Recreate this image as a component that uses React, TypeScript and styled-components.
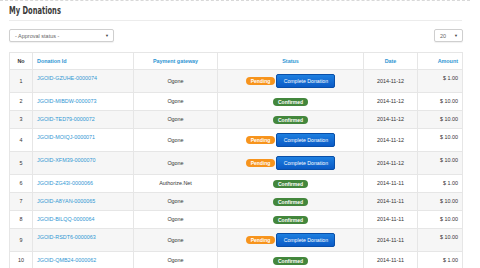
import React from "react";
import styled, { createGlobalStyle } from "styled-components";

type Status = "PENDING" | "CONFIRMED";

interface Donation {
  id: string;
  gateway: string;
  status: Status;
  date: string;
  amount: string;
}

const donations: Donation[] = [
  { id: "JGOID-GZUHE-0000074", gateway: "Ogone", status: "PENDING", date: "2014-11-12", amount: "$ 1.00" },
  { id: "JGOID-MIBDW-0000073", gateway: "Ogone", status: "CONFIRMED", date: "2014-11-12", amount: "$ 10.00" },
  { id: "JGOID-TED79-0000072", gateway: "Ogone", status: "CONFIRMED", date: "2014-11-12", amount: "$ 10.00" },
  { id: "JGOID-MOIQJ-0000071", gateway: "Ogone", status: "PENDING", date: "2014-11-12", amount: "$ 10.00" },
  { id: "JGOID-XFM39-0000070", gateway: "Ogone", status: "PENDING", date: "2014-11-12", amount: "$ 10.00" },
  { id: "JGOID-ZG43I-0000066", gateway: "Authorize.Net", status: "CONFIRMED", date: "2014-11-11", amount: "$ 1.00" },
  { id: "JGOID-A8YAN-0000065", gateway: "Ogone", status: "CONFIRMED", date: "2014-11-11", amount: "$ 10.00" },
  { id: "JGOID-BILQQ-0000064", gateway: "Ogone", status: "CONFIRMED", date: "2014-11-11", amount: "$ 10.00" },
  { id: "JGOID-RSDT6-0000063", gateway: "Ogone", status: "PENDING", date: "2014-11-11", amount: "$ 10.00" },
  { id: "JGOID-QMB24-0000062", gateway: "Ogone", status: "CONFIRMED", date: "2014-11-11", amount: "$ 1.00" },
];

const GlobalStyle = createGlobalStyle`
  html, body {
    margin: 0;
    padding: 0;
    background: #ffffff;
    font-family: "Liberation Sans", Arial, sans-serif;
    color: #333333;
    overflow: hidden;
  }
`;

export default function App() {
  return (
    <>
      <GlobalStyle />
      <Page>
        <Title>
          <TitleText>My Donations</TitleText>
        </Title>
        <Filters>
          <FakeSelect $width={105}>
            <span>- Approval status -</span>
            <Caret>▼</Caret>
          </FakeSelect>
          <FakeSelect $width={29}>
            <span>20</span>
            <Caret>▼</Caret>
          </FakeSelect>
        </Filters>
        <Table>
          <colgroup>
            <col style={{ width: 23 }} />
            <col style={{ width: 101 }} />
            <col style={{ width: 84 }} />
            <col style={{ width: 146 }} />
            <col style={{ width: 54 }} />
            <col style={{ width: 45 }} />
          </colgroup>
          <thead>
            <tr>
              <Th $plain>No</Th>
              <Th $align="left">Donation Id</Th>
              <Th>Payment gateway</Th>
              <Th>Status</Th>
              <Th>Date</Th>
              <Th $align="right">Amount</Th>
            </tr>
          </thead>
          <tbody>
            {donations.map((d, i) => (
              <Row key={d.id} $striped={i % 2 === 0}>
                <Td>{i + 1}</Td>
                <Td $align="left" $top>
                  <IdLink href="#">{d.id}</IdLink>
                </Td>
                <Td>{d.gateway}</Td>
                <Td>
                  {d.status === "PENDING" ? (
                    <StatusCell>
                      <Badge $tone="pending">Pending</Badge>
                      <CompleteButton>Complete Donation</CompleteButton>
                    </StatusCell>
                  ) : (
                    <StatusCell>
                      <Badge $tone="confirmed">Confirmed</Badge>
                    </StatusCell>
                  )}
                </Td>
                <Td>{d.date}</Td>
                <Td $align="right" $top>{d.amount}</Td>
              </Row>
            ))}
          </tbody>
        </Table>
      </Page>
    </>
  );
}

const Page = styled.div`
  width: 470px;
  border-top: 1px dashed #d8d8d8;
  padding: 0 0 0 9px;
  box-sizing: border-box;
`;

const Title = styled.h1`
  margin: 0 8px 0 0;
  padding: 4px 0 3px;
  font-family: "DejaVu Sans Condensed", "Liberation Sans Narrow", sans-serif;
  font-weight: bold;
  font-size: 11px;
  line-height: 12px;
  color: #3a3a3a;
  border-bottom: 1px solid #ececec;
`;

const TitleText = styled.span`
  display: inline-block;
  transform: scaleX(0.68);
  transform-origin: left center;
  white-space: nowrap;
`;

const Filters = styled.div`
  display: flex;
  justify-content: space-between;
  align-items: center;
  width: 454px;
  margin-top: 8px;
`;

const FakeSelect = styled.div<{ $width: number }>`
  width: ${p => p.$width}px;
  height: 13px;
  box-sizing: border-box;
  display: flex;
  align-items: center;
  justify-content: space-between;
  padding: 0 4px 0 5px;
  border: 1px solid #cfcfcf;
  border-radius: 2px;
  background: #ffffff;
  box-shadow: 0 1px 1px rgba(0, 0, 0, 0.06);
  font-size: 5.5px;
  color: #666666;
`;

const Caret = styled.span`
  font-size: 4px;
  color: #444444;
`;

const Table = styled.table`
  margin-top: 10px;
  width: 453px;
  border-collapse: collapse;
  table-layout: fixed;
  font-size: 5.4px;
  border: 1px solid #e6e6e6;
`;

const Th = styled.th<{ $align?: "left" | "right"; $plain?: boolean }>`
  height: 17px;
  box-sizing: border-box;
  padding: 0 4px;
  text-align: ${p => p.$align || "center"};
  font-weight: bold;
  color: ${p => (p.$plain ? "#333333" : "#2f96d3")};
  border: 1px solid #e6e6e6;
  background: #ffffff;
  white-space: nowrap;
`;

const Row = styled.tr<{ $striped: boolean }>`
  background: ${p => (p.$striped ? "#f6f6f6" : "#ffffff")};
`;

const Td = styled.td<{ $align?: "left" | "right"; $top?: boolean }>`
  padding: 4px 4px;
  line-height: 9px;
  text-align: ${p => p.$align || "center"};
  vertical-align: ${p => (p.$top ? "top" : "middle")};
  border: 1px solid #e6e6e6;
  color: #333333;
  white-space: nowrap;
`;

const IdLink = styled.a`
  color: #2f96d3;
  text-decoration: none;
`;

const StatusCell = styled.div`
  display: flex;
  justify-content: center;
  align-items: center;
  gap: 1px;
`;

const Badge = styled.span<{ $tone: "pending" | "confirmed" }>`
  display: inline-block;
  padding: 0 5px;
  height: 8px;
  line-height: 8px;
  border-radius: 4px;
  font-size: 5px;
  font-weight: bold;
  color: #ffffff;
  background: ${p => (p.$tone === "pending" ? "#f7941d" : "#43873c")};
`;

const CompleteButton = styled.button`
  height: 14px;
  width: 59px;
  padding: 0;
  font-family: "Liberation Sans", Arial, sans-serif;
  font-size: 5.2px;
  color: #ffffff;
  border: 1px solid #0a4fa8;
  border-radius: 2px;
  background: linear-gradient(#1d7fe0, #0b5bc6);
  cursor: pointer;
`;
